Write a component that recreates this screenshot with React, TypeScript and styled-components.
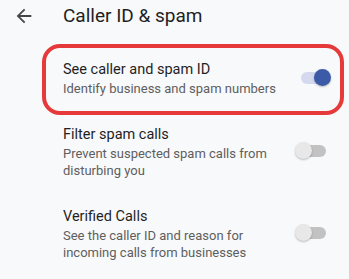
import React from "react";
import styled, { createGlobalStyle } from "styled-components";

const Global = createGlobalStyle`
  html, body { margin: 0; padding: 0; background: #f8f9fb; }
  body { font-family: Roboto, "Noto Sans", Arial, sans-serif; -webkit-font-smoothing: antialiased; }
`;

const Page = styled.div`
  width: 349px;
  height: 279px;
  background: #f8f9fb;
  overflow: hidden;
`;

const Header = styled.div`
  display: flex;
  align-items: center;
  height: 24px;
  padding: 4px 0 18px 13px;
`;

const BackButton = styled.div`
  width: 22px;
  height: 22px;
  display: flex;
  align-items: center;
  justify-content: center;
  margin-right: 28px;
  color: #444746;
`;

const Title = styled.h1`
  margin: 0;
  font-size: 19px;
  line-height: 24px;
  font-weight: 400;
  color: #1f1f1f;
`;

const List = styled.div`
  display: flex;
  flex-direction: column;
`;

const Row = styled.div<{ $highlight?: boolean }>`
  position: relative;
  display: flex;
  align-items: center;
  gap: 17px;
  padding: 14px 18px 14px 63px;
  ${(p) =>
    p.$highlight &&
    `
    &::after {
      content: "";
      position: absolute;
      left: 42px;
      right: 5px;
      top: -2px;
      bottom: -4px;
      border: 4px solid #e5393a;
      border-radius: 18px;
      pointer-events: none;
    }
  `}
`;

const Texts = styled.div`
  flex: 1;
  min-width: 0;
  display: flex;
  flex-direction: column;
`;

const RowTitle = styled.div`
  font-size: 14.5px;
  line-height: 20px;
  color: #1f1f1f;
`;

const RowSub = styled.div`
  font-size: 13px;
  line-height: 17px;
  color: #5e5e5e;
`;

const Switch = styled.div`
  position: relative;
  width: 36px;
  height: 18px;
  flex-shrink: 0;
  margin-top: -2px;
`;

const Track = styled.div<{ $on?: boolean }>`
  position: absolute;
  left: 6px;
  right: 5px;
  top: 3px;
  height: 12px;
  border-radius: 6px;
  background: ${(p) => (p.$on ? "#d4d9ee" : "#c2c2c2")};
`;

const Knob = styled.div<{ $on?: boolean }>`
  position: absolute;
  top: 0;
  left: ${(p) => (p.$on ? "19px" : "0")};
  width: 17px;
  height: 17px;
  border-radius: 50%;
  background: ${(p) => (p.$on ? "#3b5aa7" : "#e8e8e8")};
  box-shadow: 0 1px 2px rgba(0, 0, 0, 0.25);
`;

const Toggle = ({ on }: { on?: boolean }) => (
  <Switch>
    <Track $on={on} />
    <Knob $on={on} />
  </Switch>
);

const items = [
  { title: "See caller and spam ID", sub: "Identify business and spam numbers", on: true, hl: true },
  { title: "Filter spam calls", sub: "Prevent suspected spam calls from disturbing you", on: false },
  { title: "Verified Calls", sub: "See the caller ID and reason for incoming calls from businesses", on: false },
];

export default function App() {
  return (
    <Page>
      <Global />
      <Header>
        <BackButton>
          <svg width="22" height="22" viewBox="0 0 24 24" fill="currentColor">
            <path d="M20 11H7.83l5.59-5.59L12 4l-8 8 8 8 1.41-1.41L7.83 13H20v-2z" />
          </svg>
        </BackButton>
        <Title>Caller ID &amp; spam</Title>
      </Header>
      <List>
        {items.map((it) => (
          <Row key={it.title} $highlight={it.hl}>
            <Texts>
              <RowTitle>{it.title}</RowTitle>
              <RowSub>{it.sub}</RowSub>
            </Texts>
            <Toggle on={it.on} />
          </Row>
        ))}
      </List>
    </Page>
  );
}
